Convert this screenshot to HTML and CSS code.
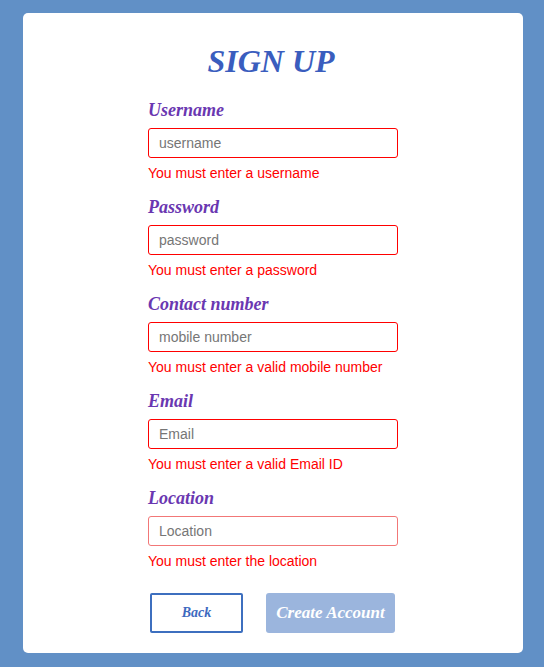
FILE: index.html
```html
<!DOCTYPE html>
<html>
<head>
<meta charset="utf-8">
<link rel="stylesheet" href="styles.css">
</head>
<body>
<div class="card">
  <h1 class="title">SIGN UP</h1>
  <form class="form">
    <div class="field">
      <label class="label">Username</label>
      <input class="input" type="text" placeholder="username">
      <p class="error">You must enter a username</p>
    </div>
    <div class="field">
      <label class="label">Password</label>
      <input class="input" type="password" placeholder="password">
      <p class="error">You must enter a password</p>
    </div>
    <div class="field">
      <label class="label">Contact number</label>
      <input class="input" type="text" placeholder="mobile number">
      <p class="error">You must enter a valid mobile number</p>
    </div>
    <div class="field">
      <label class="label">Email</label>
      <input class="input" type="text" placeholder="Email">
      <p class="error">You must enter a valid Email ID</p>
    </div>
    <div class="field">
      <label class="label">Location</label>
      <input class="input input-soft" type="text" placeholder="Location">
      <p class="error">You must enter the location</p>
    </div>
    <div class="actions">
      <button type="button" class="btn btn-back">Back</button>
      <button type="button" class="btn btn-create">Create Account</button>
    </div>
  </form>
</div>
</body>
</html>
```
FILE: styles.css
```css
html, body {
  margin: 0;
  padding: 0;
}
body {
  background: #6190c6;
  padding: 13px 21px 14px 23px;
  font-family: "Liberation Sans", Arial, sans-serif;
}
.card {
  width: 500px;
  height: 640px;
  box-sizing: border-box;
  background: #ffffff;
  border-radius: 5px;
  padding-top: 30px;
}
.title {
  margin: 0 0 19px;
  padding-right: 4px;
  text-align: center;
  font-family: "Liberation Serif", "Times New Roman", serif;
  font-style: italic;
  font-weight: bold;
  font-size: 32px;
  line-height: 37px;
  color: #3a5dbe;
}
.form {
  width: 250px;
  margin: 0 0 0 125px;
  display: flex;
  flex-direction: column;
}
.field {
  display: flex;
  flex-direction: column;
  margin-bottom: 15px;
}
.label {
  font-family: "Liberation Serif", "Times New Roman", serif;
  font-style: italic;
  font-weight: bold;
  font-size: 18px;
  line-height: 22px;
  color: #6a37b1;
  margin-bottom: 7px;
}
.input {
  box-sizing: border-box;
  width: 250px;
  height: 30px;
  margin: 0;
  border: 1px solid #ff0000;
  border-radius: 3px;
  padding: 0 10px;
  font-family: "Liberation Sans", Arial, sans-serif;
  font-size: 14px;
  color: #333;
  outline: none;
  background: #fff;
}
.input-soft {
  border-color: #f27777;
}
.input::placeholder {
  color: #767676;
}
.error {
  margin: 7px 0 0;
  font-size: 14px;
  line-height: 16px;
  color: #ff0000;
}
.actions {
  display: flex;
  justify-content: center;
  gap: 23px;
  margin-top: 9px;
  padding-right: 1px;
}
.btn {
  height: 40px;
  box-sizing: border-box;
  font-family: "Liberation Serif", "Times New Roman", serif;
  font-style: italic;
  font-weight: bold;
  cursor: pointer;
  margin: 0;
}
.btn-back {
  width: 93px;
  background: #ffffff;
  border: 2px solid #3d6fbf;
  border-radius: 2px;
  color: #3d6abf;
  font-size: 14px;
}
.btn-create {
  width: 129px;
  background: #9bb5dd;
  border: none;
  border-radius: 3px;
  color: #ffffff;
  font-size: 17px;
  padding: 0;
}
```
